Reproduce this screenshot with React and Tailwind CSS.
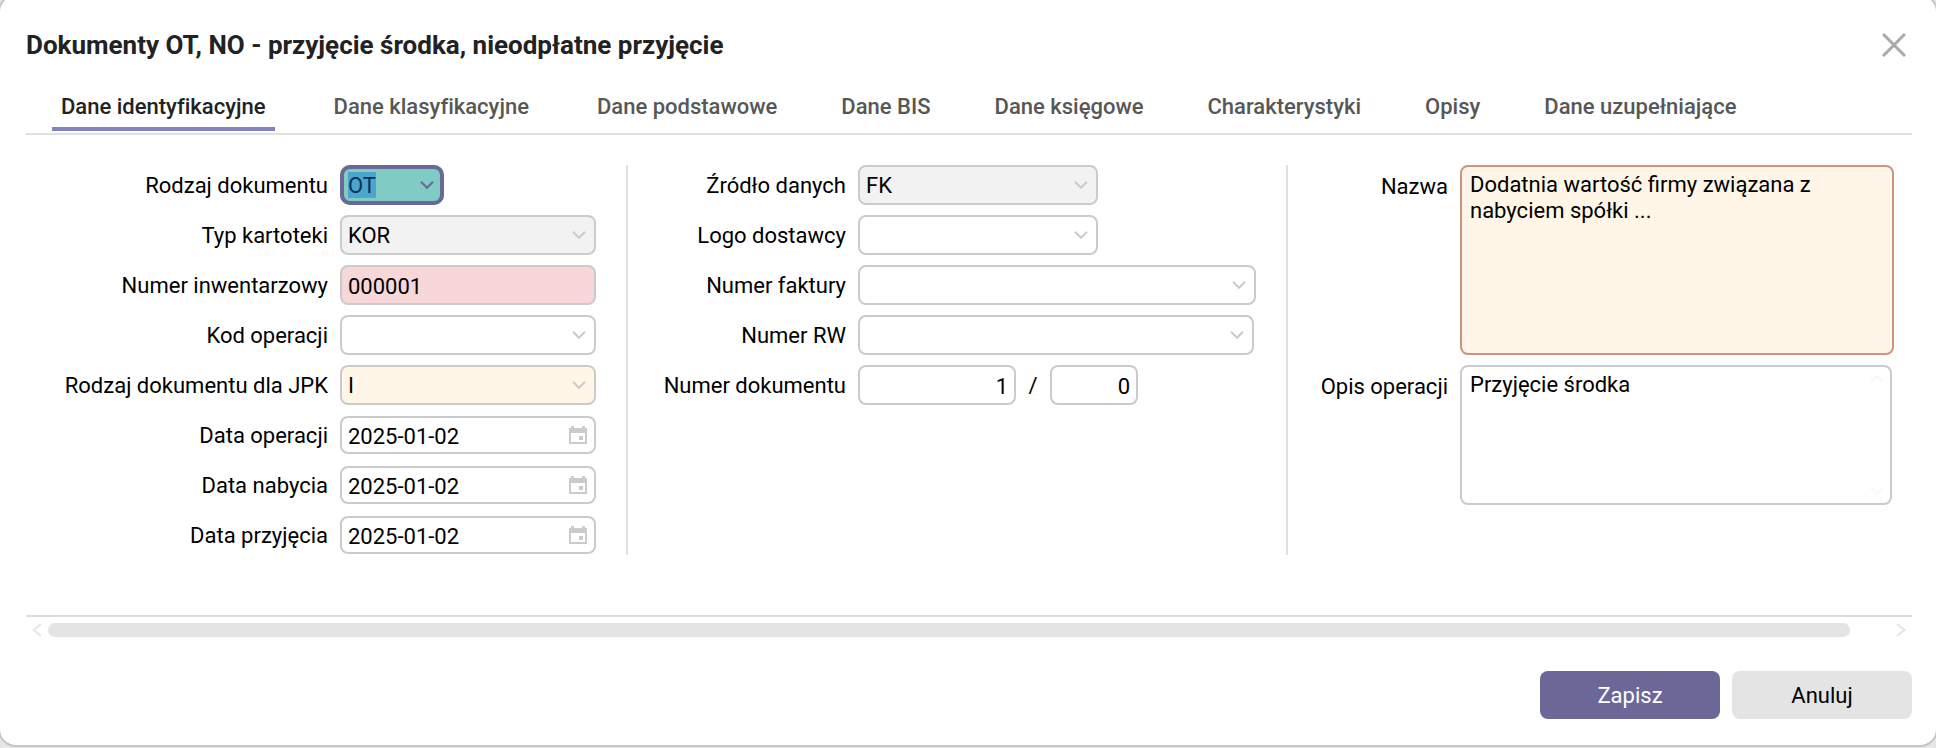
import React, { useState } from "react";

const tabs = [
    "Dane identyfikacyjne",
    "Dane klasyfikacyjne",
    "Dane podstawowe",
    "Dane BIS",
    "Dane księgowe",
    "Charakterystyki",
    "Opisy",
    "Dane uzupełniające",
];

const fieldBase = "w-full rounded-lg border-2 border-[#cbcbcb] px-1.5 pt-0.5 text-black outline-none";

function Chevron({ className }) {
    return (
        <svg viewBox="0 0 14 8" fill="none" stroke="currentColor" strokeWidth="2" className={className}>
            <path d="M1 0.8 L7 6.8 L13 0.8" />
        </svg>
    );
}

function CalendarIcon() {
    return (
        <svg viewBox="0 0 18 18" fill="currentColor" className="pointer-events-none absolute right-[9px] top-1/2 h-[18px] w-[18px] -translate-y-1/2 text-[#cbcbcb]">
            <path fillRule="evenodd" d="M0 2h2V0h3v2h8V0h3v2h2v16H0V2zm2 5v9h14V7H2z" />
            <path d="M10 10h4v4h-4z" />
        </svg>
    );
}

function Row({ id, label, labelWidth, children }) {
    return (
        <div className="flex h-10 items-center gap-3">
            <label htmlFor={id} className={`${labelWidth} shrink-0 pt-0.5 text-right whitespace-nowrap`}>{label}</label>
            {children}
        </div>
    );
}

function SelectField({ id, value = "", width, bg = "bg-white" }) {
    return (
        <div className={`relative h-10 shrink-0 ${width}`}>
            <select id={id} defaultValue={value} className={`${fieldBase} ${bg} h-10 appearance-none`}>
                <option value={value}>{value}</option>
            </select>
            <Chevron className="pointer-events-none absolute right-2.5 top-4 h-2 w-3.5 text-[#cbcbcb]" />
        </div>
    );
}

function DateField({ id, value }) {
    return (
        <div className="relative flex w-64 shrink-0">
            <input id={id} type="text" defaultValue={value} className={`${fieldBase} h-[38px] bg-white`} />
            <CalendarIcon />
        </div>
    );
}

function TextArea({ id, value, className }) {
    return (
        <div className="relative flex min-w-0 flex-1">
            <textarea
                id={id}
                defaultValue={value}
                className={`w-full resize-none rounded-lg border-2 pt-[5px] pr-10 pb-1 pl-2 outline-none ${className}`}
            />
            {/* inactive scroll arrows */}
            <Chevron className="pointer-events-none absolute top-2.5 right-2 h-2 w-3.5 rotate-180 text-[#f8f6f6]" />
            <Chevron className="pointer-events-none absolute right-2 bottom-2.5 h-2 w-3.5 text-[#f8f6f6]" />
        </div>
    );
}

export default function App() {
    const [activeTab, setActiveTab] = useState(tabs[0]);

    return (
        <div className="overflow-hidden bg-[#e6e6e6] pb-[3px] font-[Roboto,sans-serif] text-[22px] leading-[26px] text-black">
            <div role="dialog" aria-labelledby="dialog-title" className="-mt-1 rounded-2xl bg-white pr-6 pl-[26px] pt-1 pb-[26px] shadow-[0_0_0_2px_#c6c6c6]">
                <header className="flex items-center justify-between pt-[30px] pr-1.5">
                    <h1 id="dialog-title" className="text-[26px] leading-[30px] font-bold text-[#222222]">
                        Dokumenty OT, NO - przyjęcie środka, nieodpłatne przyjęcie
                    </h1>
                    <button type="button" aria-label="Zamknij" className="text-[#a9a9a9]">
                        <svg viewBox="0 0 24 24" fill="none" stroke="currentColor" strokeWidth="3" className="h-6 w-6">
                            <path d="M1 1 L23 23 M23 1 L1 23" />
                        </svg>
                    </button>
                </header>

                <nav className="mt-[28px] flex gap-[46px] border-b-2 border-[#e0e0e0] px-[26px] pb-0.5">
                    {tabs.map((tab) => (
                        <button
                            key={tab}
                            type="button"
                            onClick={() => setActiveTab(tab)}
                            className={`border-b-4 px-[9px] pt-1.5 pb-[7px] font-medium whitespace-nowrap [font-variant-ligatures:none] nth-[-n+2]:mr-1 ${tab === activeTab ? "border-[#8381be] text-[#222222]" : "border-transparent text-[#575757]"}`}
                        >
                            {tab}
                        </button>
                    ))}
                </nav>

                <form className="mt-[30px] grid grid-cols-[602fr_660fr_624fr]">
                    <section className="flex flex-col gap-2.5 border-r-2 border-[#e0e0e0]">
                        <Row id="rodzaj" label="Rodzaj dokumentu" labelWidth="w-[302px]">
                            <div className="relative h-10 w-[104px] shrink-0 rounded-[10px] bg-[#80ccc4]">
                                {/* highlight under the selected value */}
                                <span className="absolute top-[7px] left-2 h-[26px] w-7 bg-[#4ca6cc]" />
                                <select id="rodzaj" defaultValue="OT" className="relative h-10 w-full appearance-none rounded-[10px] border-4 border-[#6b6797] bg-transparent px-1 pt-0.5 text-[#05325a] outline-none">
                                    <option value="OT">OT</option>
                                    <option value="NO">NO</option>
                                </select>
                                <Chevron className="pointer-events-none absolute right-2.5 top-4 h-2 w-3.5 text-[#6b6797]" />
                            </div>
                        </Row>
                        <Row id="typ" label="Typ kartoteki" labelWidth="w-[302px]">
                            <SelectField id="typ" value="KOR" width="w-64" bg="bg-[#f2f2f2]" />
                        </Row>
                        <Row id="numer-inw" label="Numer inwentarzowy" labelWidth="w-[302px]">
                            <div className="flex w-64 shrink-0">
                                <input id="numer-inw" type="text" defaultValue="000001" className={`${fieldBase} h-10 bg-[#f7d7d7]`} />
                            </div>
                        </Row>
                        <Row id="kod" label="Kod operacji" labelWidth="w-[302px]">
                            <SelectField id="kod" width="w-64" />
                        </Row>
                        <Row id="jpk" label="Rodzaj dokumentu dla JPK" labelWidth="w-[302px]">
                            <SelectField id="jpk" value="I" width="w-64" bg="bg-[#fff6e7]" />
                        </Row>
                        <Row id="data-op" label="Data operacji" labelWidth="w-[302px]">
                            <DateField id="data-op" value="2025-01-02" />
                        </Row>
                        <Row id="data-nab" label="Data nabycia" labelWidth="w-[302px]">
                            <DateField id="data-nab" value="2025-01-02" />
                        </Row>
                        <Row id="data-prz" label="Data przyjęcia" labelWidth="w-[302px]">
                            <DateField id="data-prz" value="2025-01-02" />
                        </Row>
                    </section>

                    <section className="flex flex-col gap-2.5 border-r-2 border-[#e0e0e0]">
                        <Row id="zrodlo" label="Źródło danych" labelWidth="w-[218px]">
                            <SelectField id="zrodlo" value="FK" width="w-60" bg="bg-[#f2f2f2]" />
                        </Row>
                        <Row id="logo" label="Logo dostawcy" labelWidth="w-[218px]">
                            <SelectField id="logo" width="w-60" />
                        </Row>
                        <Row id="faktura" label="Numer faktury" labelWidth="w-[218px]">
                            <SelectField id="faktura" width="w-[398px]" />
                        </Row>
                        <Row id="rw" label="Numer RW" labelWidth="w-[218px]">
                            <SelectField id="rw" width="w-[396px]" />
                        </Row>
                        <Row id="numer-dok" label="Numer dokumentu" labelWidth="w-[218px]">
                            <div className="flex items-center">
                                <div className="flex w-[158px]">
                                    <input id="numer-dok" type="text" defaultValue="1" className={`${fieldBase} h-10 bg-white text-right`} />
                                </div>
                                <span className="w-[34px] pt-0.5 text-center">/</span>
                                <div className="flex w-[88px]">
                                    <input type="text" aria-label="Numer dokumentu - część druga" defaultValue="0" className={`${fieldBase} h-10 bg-white text-right`} />
                                </div>
                            </div>
                        </Row>
                    </section>

                    <section className="flex flex-col gap-2.5">
                        <div className="flex gap-3 pr-[18px]">
                            <label htmlFor="nazwa" className="w-40 shrink-0 pt-[9px] text-right">Nazwa</label>
                            <TextArea
                                id="nazwa"
                                value="Dodatnia wartość firmy związana z nabyciem spółki ..."
                                className="h-[190px] border-[#d1937f] bg-[#fff6e7]"
                            />
                        </div>
                        <div className="flex gap-3 pr-5">
                            <label htmlFor="opis" className="w-40 shrink-0 pt-[9px] text-right whitespace-nowrap">Opis operacji</label>
                            <TextArea id="opis" value="Przyjęcie środka" className="h-[140px] border-[#cbcbcb] bg-white" />
                        </div>
                    </section>
                </form>

                {/* horizontal scroll bar */}
                <div className="mt-[60px] flex items-center gap-1.5 border-t-2 border-[#dcdcdc] px-1.5 pt-1.5 text-[#e4e4e4]">
                    <svg viewBox="0 0 10 14" fill="none" stroke="currentColor" strokeWidth="2" className="h-3.5 w-2.5">
                        <path d="M9 1 L1.5 7 L9 13" />
                    </svg>
                    <div className="mr-10 h-3.5 flex-1 rounded-full bg-[#e4e4e4]" />
                    <svg viewBox="0 0 10 14" fill="none" stroke="currentColor" strokeWidth="2" className="h-3.5 w-2.5">
                        <path d="M1 1 L8.5 7 L1 13" />
                    </svg>
                </div>

                <footer className="mt-[34px] flex justify-end gap-3">
                    <button type="button" className="h-12 w-[180px] rounded-lg bg-[#6b6797] pt-0.5 text-white">Zapisz</button>
                    <button type="button" className="h-12 w-[180px] rounded-lg bg-[#e4e4e4] pt-0.5">Anuluj</button>
                </footer>
            </div>
        </div>
    );
}
